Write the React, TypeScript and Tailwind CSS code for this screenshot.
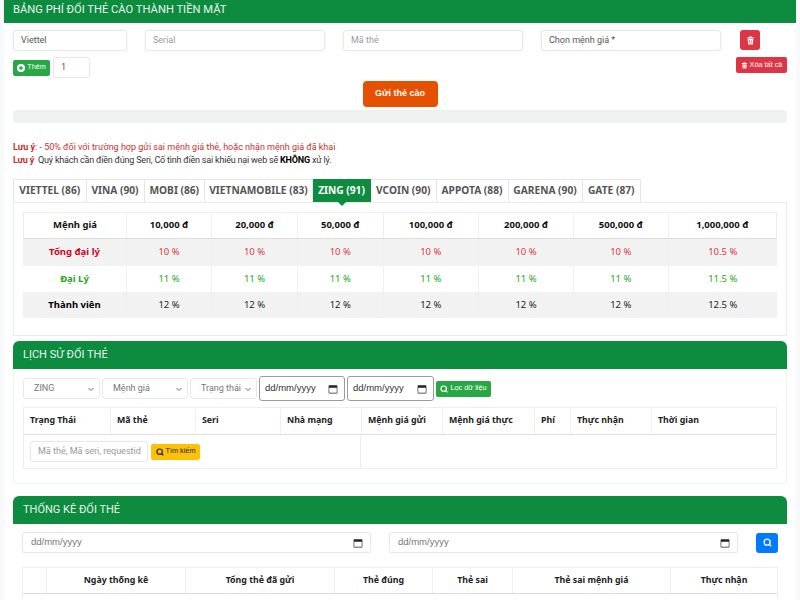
import { Search } from "lucide-react";

const tabs = [
  { label: "VIETTEL (86)", w: "w-[73.5px]" },
  { label: "VINA (90)", w: "w-[58px]" },
  { label: "MOBI (86)", w: "w-[60.5px]" },
  { label: "VIETNAMOBILE (83)", w: "w-[108px]" },
  { label: "ZING (91)", w: "w-[58px]" },
  { label: "VCOIN (90)", w: "w-[65.5px]" },
  { label: "APPOTA (88)", w: "w-[72px]" },
  { label: "GARENA (90)", w: "w-[74px]" },
  { label: "GATE (87)", w: "w-[58.5px]" },
];

const prices = [
  { label: "10,000 đ", w: "w-[85px]" },
  { label: "20,000 đ", w: "w-[86px]" },
  { label: "50,000 đ", w: "w-[85.5px]" },
  { label: "100,000 đ", w: "w-[95.5px]" },
  { label: "200,000 đ", w: "w-[95px]" },
  { label: "500,000 đ", w: "w-[94.5px]" },
  { label: "1,000,000 đ", w: "flex-1" },
];

const rows = [
  { name: "Tổng đại lý", rate: "10", last: "10.5", color: "text-[#dc3545]", head: "text-[#d0021b]", bg: "bg-[#f2f2f2]", h: "h-[27px]" },
  { name: "Đại Lý", rate: "11", last: "11.5", color: "text-[#22a822]", head: "text-[#22a822]", bg: "bg-white", h: "h-[26px]" },
  { name: "Thành viên", rate: "12", last: "12.5", color: "text-[#212529]", head: "text-black", bg: "bg-[#f2f2f2]", h: "h-[26px]" },
];

const historyCols = [
  { label: "Trạng Thái", w: "w-[86px]" },
  { label: "Mã thẻ", w: "w-[85px]" },
  { label: "Seri", w: "w-[85px]" },
  { label: "Nhà mạng", w: "w-[81px]" },
  { label: "Mệnh giá gửi", w: "w-[81px]" },
  { label: "Mệnh giá thực", w: "w-[92px]" },
  { label: "Phí", w: "w-[36px]" },
  { label: "Thực nhận", w: "w-[81px]" },
  { label: "Thời gian", w: "flex-1" },
];

const statCols = [
  { label: "", w: "w-[23px]" },
  { label: "Ngày thống kê", w: "w-[139px]" },
  { label: "Tổng thẻ đã gửi", w: "w-[149px]" },
  { label: "Thẻ đúng", w: "w-[98px]" },
  { label: "Thẻ sai", w: "w-[80px]" },
  { label: "Thẻ sai mệnh giá", w: "w-[158px]" },
  { label: "Thực nhận", w: "flex-1" },
];

const inputClass =
  "flex h-[21px] items-center whitespace-nowrap rounded-[3px] border border-[#e6e8eb] bg-white px-[7px] font-['Roboto',sans-serif] text-[9px] shadow-[0_0_2px_rgba(0,0,0,0.06)]";

const dateInputClass =
  "flex h-[21px] items-center justify-between whitespace-nowrap rounded-[3px] border border-[#e6e8eb] bg-white pl-[8px] pr-[7px] text-[9.5px] text-[#777] shadow-[0_0_2px_rgba(0,0,0,0.06)]";

function Caret() {
  return (
    <svg width="8" height="8" viewBox="0 0 16 16" className="shrink-0 text-[#666]" aria-hidden="true">
      <path d="M3 6l5 5 5-5" fill="none" stroke="currentColor" strokeWidth="2" />
    </svg>
  );
}

function CalendarIcon() {
  return (
    <svg width="10" height="10" viewBox="0 0 16 16" className="shrink-0 text-[#222]" aria-hidden="true">
      <path d="M2 2h12a1 1 0 0 1 1 1v11a1 1 0 0 1-1 1H2a1 1 0 0 1-1-1V3a1 1 0 0 1 1-1zm0 4v8h12V6z" fill="currentColor" fillRule="evenodd" />
    </svg>
  );
}

// font-awesome style solid trash, the lucide one is outlined
function TrashIcon({ size }: { size: number }) {
  return (
    <svg width={size} height={size} viewBox="0 0 16 16" fill="currentColor" aria-hidden="true">
      <path d="M6 1h4l1 1.5h3V4.5H2V2.5h3z" />
      <path
        fillRule="evenodd"
        d="M3 5.5h10l-.7 9.5H3.7zM5.6 7.2v6h1v-6zm3 0v6h1v-6z"
      />
    </svg>
  );
}

function PlusCircleIcon() {
  return (
    <svg width="8" height="8" viewBox="0 0 16 16" aria-hidden="true">
      <circle cx="8" cy="8" r="8" fill="currentColor" />
      <path d="M8 4v8M4 8h8" stroke="#28a745" strokeWidth="2.6" />
    </svg>
  );
}

function SelectBox({ label, className }: { label: string; className: string }) {
  return (
    <div className={`flex h-[21px] items-center justify-between whitespace-nowrap rounded-[3px] border border-[#e6e8eb] bg-white pl-[10px] pr-[4px] font-['Roboto',sans-serif] text-[9px] text-[#777] ${className}`}>
      {label}
      <Caret />
    </div>
  );
}

function DateBox({ className }: { className: string }) {
  return (
    <div className={`flex h-[25px] items-center justify-between rounded-[3px] border border-[#9a9a9a] bg-white pl-[5px] pr-[6px] text-[9.5px] text-[#333] ${className}`}>
      dd/mm/yyyy
      <CalendarIcon />
    </div>
  );
}

function SectionHeader({ title }: { title: string }) {
  return (
    <div className="flex h-[28px] items-center rounded-t-[6px] bg-[#0d8c40] pl-[10px] pt-[1px] font-['Roboto',sans-serif] text-[11px] text-[#e9f5ee]">
      {title}
    </div>
  );
}

export default function App() {
  return (
    <div className="h-[600px] w-[800px] overflow-hidden bg-[#f8f9fa] px-[4px] font-['Liberation_Sans','Noto_Sans',sans-serif] text-[#212529]">
      <div className="flex h-[23px] items-center bg-[#0d8c40] pb-[2px] pl-[9px] font-['Roboto',sans-serif] text-[11.2px] text-[#e9f5ee]">
        BẢNG PHÍ ĐỔI THẺ CÀO THÀNH TIỀN MẶT
      </div>

      <div className="h-[577px] overflow-hidden bg-white px-[9px]">
        <div className="flex items-start pt-[7px]">
          <div className={`${inputClass} w-[114px] text-[#555]`}>Viettel</div>
          <div className={`${inputClass} ml-[18px] w-[180px] text-[#999]`}>Serial</div>
          <div className={`${inputClass} ml-[18px] w-[180px] text-[#999]`}>Mã thẻ</div>
          <div className={`${inputClass} ml-[18px] w-[180px] text-[#555]`}>Chọn mệnh giá *</div>
          <button className="ml-[19px] flex h-[20px] w-[20px] items-center justify-center rounded-[3px] bg-[#dc3545] text-white">
            <TrashIcon size={9} />
          </button>
        </div>

        <div className="flex items-start justify-between pt-[6px]">
          <div className="flex items-center">
            <button className="flex h-[16px] w-[37px] items-center justify-center gap-[2px] rounded-[2px] bg-[#28a745] text-[7.3px] text-white">
              <PlusCircleIcon />
              Thêm
            </button>
            <div className={`${inputClass} ml-[3px] w-[37px] text-[#555]`}>1</div>
          </div>
          <button className="flex h-[16px] w-[51px] items-center justify-center gap-[2px] rounded-[2px] bg-[#dc3545] text-[7.3px] text-white">
            <TrashIcon size={7} />
            Xóa tất cả
          </button>
        </div>

        <div className="flex justify-center pt-[3px]">
          <button className="h-[26px] w-[75px] rounded-[4px] bg-[#e65100] text-[9px] font-bold text-white">
            Gửi thẻ cào
          </button>
        </div>

        <div className="mt-[3px] h-[13px] rounded-[4px] bg-[#eff1f1]" />

        <div className="pt-[18px] font-['Roboto',sans-serif] text-[9px] leading-[13px]">
          <p className="text-[#c9302c]">
            <b>Lưu ý</b>: - 50% đối với trường hợp gửi sai mệnh giá thẻ, hoặc nhận mệnh giá đã khai
          </p>
          <p className="tracking-[-0.2px] text-[#333]">
            <b className="text-[#c9302c]">Lưu ý</b>&nbsp; Quý khách cần điền đúng Seri, Cố tình điền sai khiếu nại web sẽ <b className="text-black">KHÔNG</b> xử lý.
          </p>
        </div>

        <div className="relative z-10 mt-[12px] flex h-[23px] items-stretch">
          {tabs.map((tab) => {
            const active = tab.label === "ZING (91)";
            return (
              <div
                key={tab.label}
                className={`relative flex items-center justify-center whitespace-nowrap border-t border-r font-['Noto_Sans',sans-serif] text-[10.2px] font-bold first:border-l ${tab.w} ${
                  active ? "border-[#0d8c40] bg-[#0d8c40] text-white" : "border-[#e4e6e8] text-[#555]"
                }`}
              >
                {tab.label}
                {active && (
                  <span className="absolute left-1/2 top-full -ml-[4px] h-0 w-0 border-x-[4px] border-t-[4px] border-x-transparent border-t-[#0d8c40]" />
                )}
              </div>
            );
          })}
        </div>

        <div className="h-[134px] border border-[#e8eaec] px-[9px] pt-[9px]">
          <div className="flex h-[27px] border border-[#eeeeee] border-b-[#dddddd] font-['Noto_Sans',sans-serif] text-[9.5px] font-bold text-[#111]">
            <div className="flex w-[102px] items-center justify-center">Mệnh giá</div>
            {prices.map((p) => (
              <div key={p.label} className={`flex items-center justify-center border-l border-[#eeeeee] ${p.w}`}>
                {p.label}
              </div>
            ))}
          </div>
          {rows.map((r) => (
            <div key={r.name} className={`flex font-['Noto_Sans',sans-serif] text-[9.5px] ${r.h} ${r.bg}`}>
              <div className={`flex w-[103px] items-center justify-center font-bold ${r.head}`}>{r.name}</div>
              {prices.map((p, i) => (
                <div key={p.label} className={`flex items-center justify-center border-l border-[#f0f0f0] ${p.w} ${r.color}`}>
                  {i === prices.length - 1 ? r.last : r.rate} %
                </div>
              ))}
            </div>
          ))}
        </div>

        <div className="mt-[5px]">
          <SectionHeader title="LỊCH SỬ ĐỔI THẺ" />
          <div className="h-[115px] rounded-b-[4px] border border-t-0 border-[#f0f1f2] bg-white px-[9px]">
            <div className="flex items-center gap-[2px] pt-[7px]">
              <SelectBox label="ZING" className="w-[77px]" />
              <SelectBox label="Mệnh giá" className="w-[86px]" />
              <SelectBox label="Trạng thái" className="w-[67px]" />
              <DateBox className="w-[86px]" />
              <DateBox className="w-[87px]" />
              <button className="flex h-[16px] w-[55px] items-center justify-center gap-[2px] rounded-[2px] bg-[#28a745] text-[7.3px] text-white">
                <Search size={8} strokeWidth={3.5} />
                Lọc dữ liệu
              </button>
            </div>

            <div className="mt-[6px] border border-[#eeeeee]">
              <div className="flex h-[27px] border-b border-[#dddddd] font-['Noto_Sans',sans-serif] text-[8.8px] font-bold text-[#222]">
                {historyCols.map((c, i) => (
                  <div key={c.label} className={`flex items-center px-[6px] ${c.w} ${i > 0 ? "border-l border-[#f0f0f0]" : ""}`}>
                    {c.label}
                  </div>
                ))}
              </div>
              <div className="flex h-[33px] items-center">
                <div className="flex h-full w-[337px] items-center border-r border-[#eeeeee] pl-[6px]">
                  <div className={`${inputClass} w-[118px] text-[#999]`}>Mã thẻ, Mã seri, requestid</div>
                  <button className="ml-[3px] flex h-[16px] w-[49px] items-center justify-center gap-[2px] rounded-[2px] bg-[#ffc107] text-[7.3px] text-[#212529]">
                    <Search size={8} strokeWidth={3.5} />
                    Tìm kiếm
                  </button>
                </div>
              </div>
            </div>
          </div>
        </div>

        <div className="mt-[12px]">
          <SectionHeader title="THỐNG KÊ ĐỔI THẺ" />
          <div className="px-[9px]">
            <div className="flex items-center pt-[8px]">
              <div className={`${dateInputClass} w-[349px]`}>
                dd/mm/yyyy
                <CalendarIcon />
              </div>
              <div className={`${dateInputClass} ml-[18px] w-[349px]`}>
                dd/mm/yyyy
                <CalendarIcon />
              </div>
              <button className="ml-[18px] flex h-[20px] w-[22px] items-center justify-center rounded-[3px] bg-[#007bff] text-white">
                <Search size={9} strokeWidth={3.5} />
              </button>
            </div>
            <div className="mt-[14px] h-[60px] border border-[#eeeeee]">
              <div className="flex h-[26px] border-b border-[#dddddd] font-['Noto_Sans',sans-serif] text-[8.8px] font-bold text-[#222]">
                {statCols.map((c, i) => (
                  <div key={c.label || "blank"} className={`flex items-center justify-center ${c.w} ${i > 0 ? "border-l border-[#f0f0f0]" : ""}`}>
                    {c.label}
                  </div>
                ))}
              </div>
            </div>
          </div>
        </div>
      </div>
    </div>
  );
}
